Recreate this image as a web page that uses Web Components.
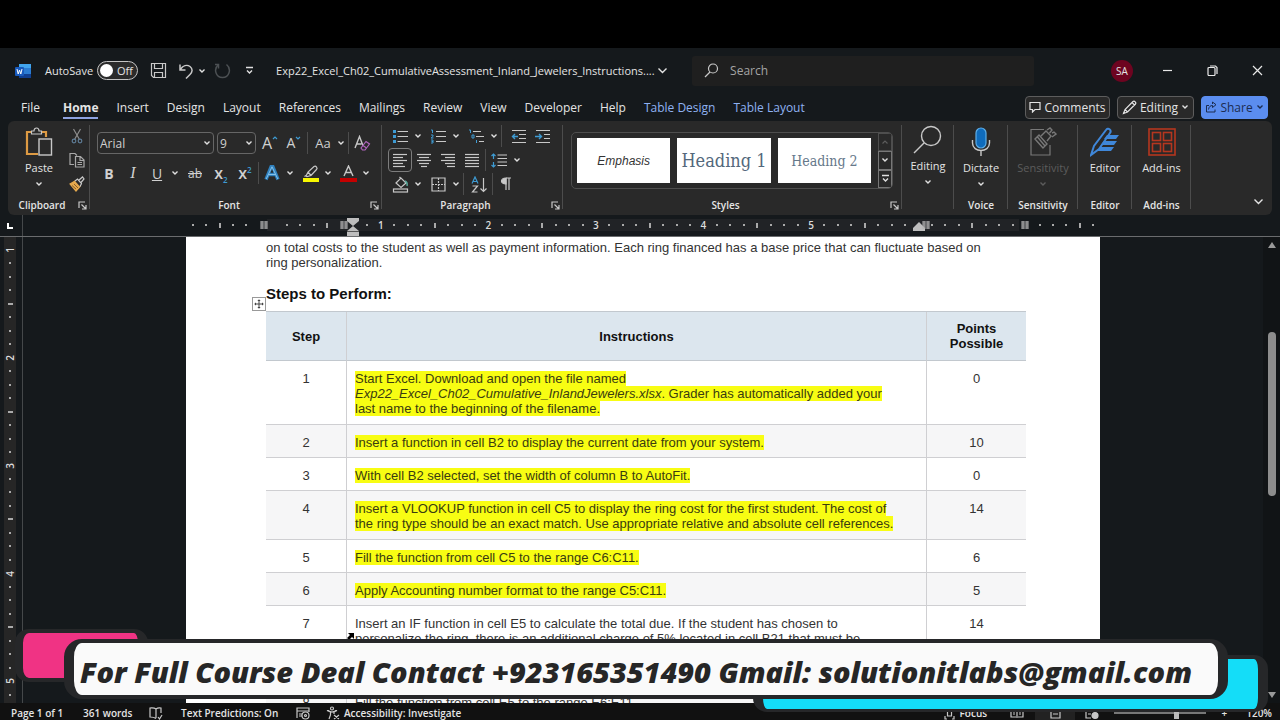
<!DOCTYPE html>
<html lang="en">
<head>
<meta charset="utf-8">
<title>Word</title>
<style>
html, body { margin: 0; height: 100%; background: #000; }
body { font-family: "Open Sans", "Noto Sans", sans-serif; color: #e4e4e4; overflow: hidden; }
</style>
</head>
<body>
<word-window></word-window>
<script>
const S = (w, h, body) => `<svg width="${w}" height="${h}" viewBox="0 0 ${w} ${h}" fill="none" stroke="#c8c8c8" stroke-width="1.2">${body}</svg>`;
const lines = (rows, w = 16, h = 14) => S(w, h, rows.map(([a, b, y]) => `<path d="M${a} ${y}H${b}"/>`).join(''));
const launcher = S(9, 9, '<path d="M1 7V1H7M3.500 3.500L8 8M8 4V8H4"/>');
const ICONS = {
  word: S(16, 16, '<rect x="4" y="1" width="12" height="14" rx="1" fill="#2b7cd3" stroke="none"/><rect x="4" y="1" width="12" height="4" fill="#41a5ee" stroke="none"/><rect x="4" y="11" width="12" height="4" fill="#103f91" stroke="none"/><rect x="0" y="4" width="9" height="9" rx="1" fill="#185abd" stroke="none"/><path d="M2 6l1.200 5L4.500 7l1.300 4L7 6" stroke="#fff" stroke-width="1"/>'),
  save: S(17, 17, '<path d="M1.500 1.500H15.500V15.500H3.500L1.500 13.500ZM4.500 1.500V6.500H12.500V1.500M4.500 15.500V10.500H12.500V15.500"/>'),
  undo: S(16, 16, '<path d="M2 1.500V7H7.500M2 7C5 2.500 9 1.500 12 3.500C15 6 14.500 9 12 11.500L8 15.500" stroke-width="1.500"/>'),
  redo: S(17, 17, '<path d="M12.500 2.500C18 7 15 15.500 8.500 15.500C2 15.500-1 7 4.500 2.500M4.500 6.500V2.500H1" stroke="#4c5053" stroke-width="1.500"/>'),
  chev: S(8, 8, '<path d="M1.500 2.500L4 5L6.500 2.500" stroke="#e0e0e0" stroke-width="1.400"/>'),
  chevdim: S(8, 8, '<path d="M1.500 2.500L4 5L6.500 2.500" stroke="#5c5c5c" stroke-width="1.400"/>'),
  chevup: S(8, 8, '<path d="M1.500 5.500L4 3L6.500 5.500" stroke="#5c5c5c"/>'),
  chevbig: S(11, 11, '<path d="M1.500 3.500L5.500 7.500L9.500 3.500" stroke="#e4e4e4" stroke-width="1.400"/>'),
  more: S(9, 9, '<path d="M1 1.500H8M2 4.500L4.500 7L7 4.500" stroke="#e0e0e0" stroke-width="1.400"/>'),
  search: S(15, 15, '<circle cx="9" cy="5.500" r="4.500"/><path d="M6 9L1 14"/>'),
  min: S(11, 11, '<path d="M1 5.500H10" stroke="#e8e8e8"/>'),
  restore: S(11, 11, '<rect x="1" y="2.500" width="7" height="8" rx="1" stroke="#e8e8e8"/><path d="M3 1H8.500L10 2.500V9" stroke="#e8e8e8"/>'),
  close: S(11, 11, '<path d="M1 1L10 10M10 1L1 10" stroke="#e8e8e8"/>'),
  comment: S(12, 12, '<path d="M1 1.500H11V8.500H6L3.500 11V8.500H1Z" stroke="#e4e4e4"/>'),
  pencil: S(15, 15, '<path d="M1.500 13.500L3 9.500L11 1.500C12.500 .5 14.500 2.500 13.500 4L5.500 12ZM3 9.500L5.500 12M10 2.500L12.500 5" stroke="#e4e4e4"/>'),
  share: S(12, 12, '<path d="M4 4.500H1.500V11H10V8.500M3.500 8.500C4 5.500 5.500 4.500 7.500 4.500V6.500L11 3.700L7.500 1V3" stroke="#1c2c50" stroke-width="1"/>'),
  paste: S(28, 30, '<path d="M7 5H2V27H13M16 5H21V10" stroke="#dd9a43" stroke-width="2.200"/><path d="M6.500 7V4H9C9 0 14 0 14 4H16.500V7Z"/><rect x="14" y="12" width="12.500" height="16" fill="#292929" stroke-width="1.400"/>'),
  cut: S(12, 16, '<path d="M2.500 1L8.500 11.500M9.500 1L3.500 11.500" stroke="#8d8d8d"/><circle cx="3" cy="13" r="1.800" stroke="#5e7c96"/><circle cx="9" cy="13" r="1.800" stroke="#5e7c96"/>'),
  copy: S(16, 16, '<path d="M5 12.500H1V1.500H6L8 3.500" stroke="#a8a8a8"/><path d="M6.500 4.500H11.500L15 8V15H6.500ZM11 5V8.500H15M8.500 10.500H13M8.500 12.500H13" stroke="#a8a8a8"/>'),
  painter: S(16, 16, '<path d="M1 8L6 5L11 10.500L7 15Z" fill="#e5a94e" stroke="#e5a94e"/><path d="M6 5L8.500 3L12.500 7.500L11 10.500M9.500 4.500L13.500 1L15 3L12 6.500" fill="#292929"/><path d="M3 9.500L7 13M5 8L9 12" stroke="#755020" stroke-width=".800"/>'),
  eraser: S(17, 17, '<path d="M1 13L5.500 1.500L9.500 12M2.500 9H7.500" stroke-width="1.400"/><path d="M7 13L12 6.500L15.500 9L11 15H8.500Z" fill="#292929" stroke="#b065bd"/><path d="M9 10.500L12.500 13" stroke="#b065bd"/>'),
  caretup: S(6, 4, '<path d="M1 3L3 1L5 3" stroke="#3e9bd3"/>'),
  caretdown: S(6, 4, '<path d="M1 1L3 3L5 1" stroke="#3e9bd3"/>'),
  effects: S(16, 16, '<path d="M2 14.500L7.200 1.500H8.800L14 14.500M4.500 9.500H11.500" stroke="#2f80bd" stroke-width="3.400"/><path d="M2.200 14L8 1.800L13.800 14M4.500 9.500H11.500" stroke="#8fc8ee" stroke-width=".900"/>'),
  marker: S(17, 17, '<path d="M4 11L6 7L12 1.500C14 .5 16 3 14.500 4.500L9 10.500L5 11.500ZM6 7L9 10.500M2.500 11.500L4 10.500"/><rect x="1" y="13" width="16" height="4" fill="#f7f700" stroke="none"/>'),
  fontcolor: S(17, 17, '<path d="M4 11L8.500 1L13 11M5.500 7.500H11.500" stroke-width="1.400"/><rect x="0" y="13" width="17" height="4" fill="#c40000" stroke="none"/>'),
  bullets: S(16, 15, '<path d="M5.500 2.500H16M5.500 7.500H16M5.500 12.500H16"/><path d="M1 2.500H4M1 7.500H4M1 12.500H4" stroke="#3e9bd3" stroke-width="3"/>'),
  numbers: S(16, 15, '<path d="M6 2.500H16M6 7.500H16M6 12.500H16"/><path d="M1 1H2.500V4M1 6H3V7.500L1 9H3.500M1 11H3V14H1M1.500 12.500H3" stroke="#3e9bd3" stroke-width="1"/>'),
  multi: S(16, 15, '<path d="M5 2.500H13M8 7.500H16M11 12.500H16"/><path d="M1 1H2.500V4M4 6H6V9H4ZM8.500 11V14" stroke="#3e9bd3" stroke-width="1"/>'),
  outdent: S(16, 15, '<path d="M1 1.500H15M8 5.500H15M8 9.500H15M1 13.500H15"/><path d="M7 7.500H1.500M4 5L1.500 7.500L4 10" stroke="#3e9bd3" stroke-width="1.400"/>'),
  indent: S(16, 15, '<path d="M1 1.500H15M9 5.500H15M9 9.500H15M1 13.500H15"/><path d="M0 7.500H6.500M4 5L6.500 7.500L4 10" stroke="#3e9bd3" stroke-width="1.400"/>'),
  left: lines([[1, 15, 1.5], [1, 11, 4.5], [1, 15, 7.5], [1, 11, 10.5], [1, 13, 13.5]], 16, 15),
  center: lines([[1, 15, 1.5], [3, 13, 4.5], [1, 15, 7.5], [3, 13, 10.5], [5, 11, 13.5]], 16, 15),
  right: lines([[1, 15, 1.5], [5, 15, 4.5], [1, 15, 7.5], [5, 15, 10.5], [7, 15, 13.5]], 16, 15),
  justify: lines([[1, 15, 1.5], [1, 15, 4.5], [1, 15, 7.5], [1, 15, 10.5], [1, 15, 13.5]], 16, 15),
  spacing: S(16, 15, '<path d="M6.500 2H16M6.500 5.500H16M6.500 9H16M6.500 12.500H16"/><path d="M2.500 1V6M.5 3L2.500 1L4.500 3M2.500 14V9M.5 12L2.500 14L4.500 12" stroke="#3e9bd3"/>'),
  shade: S(17, 17, '<path d="M4 7L9 2L14 7L9 11.500Z M7.500 1L9 2.500"/><path d="M13 5C15 6 15.500 8 15 10" stroke="#58a89a" stroke-width="1.500"/><rect x="1.500" y="13" width="14" height="3"/>'),
  borders: S(15, 15, '<path d="M1 1H14V14H1Z"/><path d="M7.500 1V14M1 7.500H14" stroke-dasharray="2 1"/>'),
  sort: S(17, 17, '<path d="M1 7.500L4 1L7 7.500M2 5.500H6" stroke="#3e9bd3"/><path d="M1.500 10H6.500L1.500 16H6.500M12.500 2V15.500M9.500 12.500L12.500 15.500L15.500 12.500"/>'),
  pilcrow: S(12, 14, '<path d="M6 1H11M6 1V13M9 1V13" /><path d="M6 1C0 1 0 7 6 7Z" fill="#c8c8c8"/>'),
  find: S(30, 30, '<circle cx="18" cy="11" r="9.500" stroke-width="1.400"/><path d="M11 18L1 28" stroke-width="1.400"/>'),
  mic: S(20, 30, '<rect x="5" y="1" width="10" height="20" rx="5" fill="#0f6cbd" stroke="#5eaee8"/><path d="M1.500 13V16C1.500 26 18.500 26 18.500 16V13M10 24V29" stroke-width="1.400"/>'),
  sens: S(28, 30, '<path d="M15 2.500H2V28H21V18" stroke="#787878"/><path d="M6 12L10 8L18 17L14 21ZM8.500 10L16 19M12 9L17 4L22 9L18 14M18 3L21 1L23 3L20.500 6M23 6L25 5L27 7L23 10" stroke="#787878" stroke-width="1.400"/>'),
  editor: S(30, 30, '<path d="M1 28L4 19L16 3C18 0 22 3 20 6L9 22Z" stroke="#3f87d9" stroke-width="2"/><path d="M17 8H29L26 12H14ZM14 14H27L24 18H11ZM11 20H24L21 24H6Z" fill="#3f87d9" stroke="none"/>'),
  addins: S(28, 28, '<g stroke="#b5361f" stroke-width="1.600"><rect x="1" y="1" width="26" height="26"/><rect x="4.500" y="4.500" width="8" height="8"/><rect x="15.500" y="4.500" width="8" height="8"/><rect x="4.500" y="15.500" width="8" height="8"/><rect x="15.500" y="15.500" width="8" height="8"/></g>'),
  launcher,
  book: S(14, 13, '<path d="M7 2V11M7 2C5 .5 3 1 1 1V10C3 10 5 10 7 11.500M7 2C9 .5 10 1 12 1V6M9 10L10.500 12L13 8"/>'),
  record: S(14, 13, '<path d="M1 11V1H13V5M1 4H13M3 7H6M3 9H6"/><circle cx="9.500" cy="8.500" r="3.500"/><circle cx="9.500" cy="8.500" r="1"/>'),
  access: S(14, 14, '<circle cx="6" cy="2.500" r="1.500"/><path d="M1 4.500L4.500 6V9L3 13M11 4.500L8 6V8M1 4.500L6 6L11 4.500M8 9L13 13M13 9L8 13"/>'),
  focus: S(11, 13, '<path d="M1 4V1H3M8 1H10V4M1 9V12H3M8 12H10V9M3.500 4H7.500V9H3.500Z"/>'),
  read: S(14, 13, '<path d="M7 3V11M7 3C5 2 3 2 1 2V10H6M7 3C9 2 11 2 13 2V10H8M3 5H5M3 7H5M9 5H11M9 7H11"/>'),
  print: S(11, 13, '<path d="M1 1H10V11H1ZM3 4H8M3 7H8"/>'),
  web: S(14, 13, '<path d="M1 1H12V5M1 1V11H6M3 4H8M3 7H6"/><circle cx="10" cy="8.500" r="3" fill="#c8c8c8"/>'),
  move: S(14, 14, '<rect x=".5" y=".5" width="13" height="13" fill="#fff" stroke="#999" stroke-width="1"/><path d="M7 2.500V11.500M2.500 7H11.500M5.800 3.500H8.200M5.800 10.500H8.200M3.500 5.800V8.200M10.500 5.800V8.200" stroke="#444" stroke-width="1"/>'),
  cursor: S(9, 9, '<path d="M2 1H8V7L6 5L3 8L1 6L4 3Z" fill="#000" stroke="none"/>'),
  grips: S(12, 18, '<path d="M0 0H12V3L6 8L0 3ZM0 13L6 8L12 13V18H0Z" fill="#bdbdbd" stroke="none"/><path d="M0 13.500H12" stroke="#555" stroke-width="1"/>'),
  rgrip: S(12, 10, '<path d="M0 10V7L6 1L12 7V10Z" fill="#bdbdbd" stroke="none"/>'),
  colmark: S(8, 9, '<path d="M0 1H8M0 3H8M0 5H8M0 7H8M2 0V8M6 0V8" stroke="#b4b4b4" stroke-width="1"/>'),
};

const BASE = `*{box-sizing:border-box}
button,a,input,select{font:inherit;color:inherit;background:none;border:0;padding:0;margin:0;text-decoration:none}
svg{display:block;flex:none}`;

function define(name, css, html) {
  customElements.define(name, class extends HTMLElement {
    constructor() {
      super();
      const root = this.attachShadow({ mode: 'open' });
      const body = typeof html === 'function' ? html(this) : html;
      root.innerHTML = `<style>${BASE}${css}</style>${body}`;
    }
  });
}

define('ui-icon', ':host{display:block;flex:none}', el => ICONS[el.getAttribute('name')] || '');

define('tool-button', `
:host{display:flex;flex:none;height:24px}
button{display:flex;align-items:center;height:24px;border-radius:4px}
.face{display:flex;justify-content:center;align-items:center;width:24px}
.arrow{display:flex;justify-content:center;width:12px}
:host([pressed]) button{outline:1px solid #7d7d7d;outline-offset:-1px}
`, el => `<button type="button" aria-label="${el.getAttribute('label')}"><span class="face"><slot></slot></span>${el.hasAttribute('menu') ? `<span class="arrow">${ICONS.chev}</span>` : ''}</button>`);

define('big-button', `
:host{display:block;flex:none;font-size:11px;font-weight:500}
button{display:flex;flex-direction:column;align-items:center;width:100%}
.pic{height:32px;display:flex;align-items:center}
.txt{line-height:16px;margin-top:2px}
.arrow{margin-top:4px}
:host([disabled]) button{color:#5c5c5c}
`, el => `<button type="button" ${el.hasAttribute('disabled') ? 'disabled' : ''}><span class="pic">${ICONS[el.getAttribute('icon')]}</span><span class="txt"><slot></slot></span>${el.hasAttribute('menu') ? `<span class="arrow">${el.hasAttribute('disabled') ? ICONS.chevdim : ICONS.chev}</span>` : ''}</button>`);

define('ribbon-group', `
:host{display:grid;grid-template-rows:1fr 16px;flex:none;padding:3px 0 2px;position:relative}
:host::after{content:"";position:absolute;right:0;top:4px;bottom:6px;width:1px;background:#4c4c4c}
.label{display:flex;align-items:center;justify-content:center;font-size:10px;font-weight:600;line-height:16px}
:host([launch]) .label{padding-right:14px}
.launch{position:absolute;right:3px;bottom:5px}
`, el => `<div><slot></slot></div><div class="label">${el.getAttribute('label') || ''}</div>${el.hasAttribute('launch') ? `<button class="launch" aria-label="${el.getAttribute('label')} settings">${ICONS.launcher}</button>` : ''}`);

define('style-card', `
:host{display:flex;width:94px;height:45px}
button{flex:1;background:#fff;display:flex;align-items:center;justify-content:center;color:#333;white-space:nowrap}
:host([kind=emphasis]) button{font:italic 12px "Liberation Sans",sans-serif}
:host([kind=h1]) button{font:18px "DejaVu Serif Condensed","DejaVu Serif",serif;color:#53687c}
:host([kind=h2]) button{font:14px "DejaVu Serif Condensed","DejaVu Serif",serif;color:#66788a}
`, '<button type="button"><slot></slot></button>');

define('title-bar', `
:host{display:flex;align-items:center;height:45px;font-size:11px;padding-left:15px}
label{display:flex;align-items:center;gap:4px;margin-left:14px}
input[type=checkbox]{appearance:none;width:41px;height:19px;border:1px solid #c4c4c4;border-radius:10px;background:#2b2b2b;grid-area:1/1;position:relative}
input[type=checkbox]::before{content:"";position:absolute;left:2px;top:2px;width:13px;height:13px;border-radius:50%;background:#fff}
.switch{display:grid;align-items:center}
.switch span{grid-area:1/1;padding-left:20px;position:relative}
.quick{display:flex;align-items:center;margin-left:12px}
.name{display:flex;align-items:center;gap:2px;margin-left:22px;width:382px;white-space:nowrap}
.search{display:flex;align-items:center;gap:11px;width:342px;height:30px;margin-left:34px;padding-left:12px;background:#1f1f1f;border-radius:3px;font-size:12px}
.search input{flex:1;min-width:0;outline:0}
.search input::placeholder{color:#a4a4a4;opacity:1}
.avatar{margin-left:auto;width:22px;height:22px;border-radius:50%;background:#6d0420;display:flex;align-items:center;justify-content:center;font-size:10px;margin-right:12px}
.win{width:45px;height:45px;display:flex;align-items:center;justify-content:center}
.u{margin-right:4px}.r{margin:0 14px 0 8px}.s{margin-right:11px}
`, `${ICONS.word}
<label>AutoSave<span class="switch"><input type="checkbox" role="switch"><span>Off</span></span></label>
<div class="quick"><button class="s" aria-label="Save">${ICONS.save}</button><button class="u" aria-label="Undo">${ICONS.undo}</button><button aria-label="Undo list">${ICONS.chev}</button><button class="r" aria-label="Redo">${ICONS.redo}</button><button aria-label="Customize toolbar">${ICONS.more}</button></div>
<button class="name"><span>Exp22_Excel_Ch02_CumulativeAssessment_Inland_Jewelers_Instructions....</span>${ICONS.chevbig}</button>
<div class="search">${ICONS.search}<input type="search" aria-label="Search" placeholder="Search"></div>
<button class="avatar" aria-label="Account">SA</button>
<button class="win" aria-label="Minimize">${ICONS.min}</button><button class="win" aria-label="Restore">${ICONS.restore}</button><button class="win" aria-label="Close">${ICONS.close}</button>`);

const TABS = ['File', 'Home', 'Insert', 'Design', 'Layout', 'References', 'Mailings', 'Review', 'View', 'Developer', 'Help', 'Table Design', 'Table Layout'];
define('tab-strip', `
:host{display:flex;align-items:center;height:28px;padding:0 12px 0 21px;font-size:12px}
nav{display:flex;gap:18px;white-space:nowrap}
a{line-height:18px;border-bottom:2px solid transparent;padding-top:3px}
a:first-child{margin-right:5px}
a.on{font-weight:700;border-color:#8ea2e0}
a.ctx{color:#8fb2f2}
.acts{margin-left:auto;display:flex;gap:7px;font-weight:500}
.acts button{height:23px;border:1px solid #5d5d5d;border-radius:4px;background:#292929;display:flex;align-items:center;justify-content:center;gap:3px}
.acts .c{width:85px}.acts .e{width:77px}
.acts .s{width:67px;background:#5b8def;border-color:#5b8def;color:#1c2c50}
.s svg:last-child path{stroke:#1c2c50}
`, `<nav>${TABS.map((t, i) => `<a href="#" class="${i === 1 ? 'on' : i > 10 ? 'ctx' : ''}">${t}</a>`).join('')}</nav>
<div class="acts"><button class="c">${ICONS.comment}Comments</button><button class="e">${ICONS.pencil}Editing ${ICONS.chev}</button><button class="s">${ICONS.share}Share ${ICONS.chev}</button></div>`);

define('ribbon-bar', `
:host{display:flex;height:94px;margin:0 8px;background:#292929;border-radius:6px;position:relative}
.row{display:flex;align-items:center;height:24px;color:#d0d0d0}
i.div{width:1px;height:22px;background:#4c4c4c;margin:0 1px}
.clip{width:82px}.font{width:292px}.para{width:181px}.styles{width:339px}
.edit{width:52px}.voice{width:54px}.sens{width:70px}.editor{width:54px}.add{width:59px}
.clipbox{display:grid;grid-template-columns:52px 1fr;padding:2px 0 0 5px}
.stack{display:flex;flex-direction:column;margin-top:-2px}
.fontbox{padding:7px 0 0 7px}
.pick{position:relative;display:flex;align-items:center;height:22px;border:1px solid #666;border-radius:4px;margin-right:3px}
.pick select{appearance:none;width:100%;height:20px;padding-left:2px;font-size:12px;outline:0}
.pick svg{position:absolute;right:2px;pointer-events:none}
.f1{width:117px}.f2{width:39px;margin-right:2px}
.second{margin-top:6px}
.parabox{padding-left:6px}
.gap2{margin-left:2px}.gap4{margin-left:4px}
b,em,u,s{font-size:14px}
em{font-family:"Liberation Serif",serif;font-size:16px}
s{font-size:12px}
sub,sup{font-size:8px;color:#3e9bd3;line-height:0}
.x{font-weight:600}
.aa{font-size:13px}
.size{display:flex;align-items:flex-start;font-size:16px;line-height:18px}
.size.small{font-size:14px}
.size ui-icon{margin-top:2px}
.gallery{display:flex;gap:7px;align-items:center;height:57px;margin:8px 8px 0;padding-left:5px;border:1px solid #4e4e4e;border-radius:5px;overflow:hidden;width:322px}
.scroll{display:grid;grid-template-rows:repeat(3,1fr);width:14px;height:100%;margin-left:auto}
.scroll button{display:flex;align-items:center;justify-content:center;border:1px solid #777}
.scroll button:first-child{border-color:#4e4e4e}
.one{padding-top:2px}
.collapse{margin-left:auto;align-self:flex-end;padding:0 8px 8px}
`, `
<ribbon-group class="clip" label="Clipboard" launch><div class="clipbox"><big-button icon="paste" menu>Paste</big-button><div class="stack"><tool-button label="Cut"><ui-icon name="cut"></ui-icon></tool-button><tool-button label="Copy"><ui-icon name="copy"></ui-icon></tool-button><tool-button label="Format Painter"><ui-icon name="painter"></ui-icon></tool-button></div></div></ribbon-group>
<ribbon-group class="font" label="Font" launch><div class="fontbox">
<div class="row"><span class="pick f1"><select aria-label="Font"><option>Arial</option></select>${ICONS.chev}</span><span class="pick f2"><select aria-label="Font size"><option>9</option></select>${ICONS.chev}</span>
<tool-button label="Grow font"><span class="size">A<ui-icon name="caretup"></ui-icon></span></tool-button><tool-button label="Shrink font"><span class="size small">A<ui-icon name="caretdown"></ui-icon></span></tool-button><i class="div"></i><tool-button class="gap2" label="Change case" menu><span class="aa">Aa</span></tool-button><i class="div gap4"></i><tool-button label="Clear formatting"><ui-icon name="eraser"></ui-icon></tool-button></div>
<div class="row second"><tool-button label="Bold"><b>B</b></tool-button><tool-button label="Italic"><em>I</em></tool-button><tool-button label="Underline" menu><u>U</u></tool-button><tool-button class="gap2" label="Strikethrough"><s>ab</s></tool-button><tool-button class="gap2" label="Subscript"><span class="x">x<sub>2</sub></span></tool-button><tool-button label="Superscript"><span class="x">x<sup>2</sup></span></tool-button><i class="div gap2"></i><tool-button label="Text effects" menu><ui-icon name="effects"></ui-icon></tool-button><tool-button class="gap2" label="Highlight" menu><ui-icon name="marker"></ui-icon></tool-button><tool-button class="gap2" label="Font color" menu><ui-icon name="fontcolor"></ui-icon></tool-button></div>
</div></ribbon-group>
<ribbon-group class="para" label="Paragraph" launch><div class="parabox">
<div class="row"><tool-button label="Bullets" menu><ui-icon name="bullets"></ui-icon></tool-button><tool-button class="gap2" label="Numbering" menu><ui-icon name="numbers"></ui-icon></tool-button><tool-button class="gap2" label="Multilevel list" menu><ui-icon name="multi"></ui-icon></tool-button><i class="div gap4"></i><tool-button class="gap4" label="Decrease indent"><ui-icon name="outdent"></ui-icon></tool-button><tool-button label="Increase indent"><ui-icon name="indent"></ui-icon></tool-button></div>
<div class="row"><tool-button label="Align left" pressed><ui-icon name="left"></ui-icon></tool-button><tool-button label="Center"><ui-icon name="center"></ui-icon></tool-button><tool-button label="Align right"><ui-icon name="right"></ui-icon></tool-button><tool-button label="Justify"><ui-icon name="justify"></ui-icon></tool-button><i class="div"></i><tool-button label="Line spacing" menu><ui-icon name="spacing"></ui-icon></tool-button></div>
<div class="row"><tool-button label="Shading" menu><ui-icon name="shade"></ui-icon></tool-button><tool-button class="gap2" label="Borders" menu><ui-icon name="borders"></ui-icon></tool-button><i class="div gap4"></i><tool-button class="gap2" label="Sort"><ui-icon name="sort"></ui-icon></tool-button><i class="div"></i><tool-button label="Show marks"><ui-icon name="pilcrow"></ui-icon></tool-button></div>
</div></ribbon-group>
<ribbon-group class="styles" label="Styles" launch><div class="gallery"><style-card kind="emphasis">Emphasis</style-card><style-card kind="h1">Heading 1</style-card><style-card kind="h2">Heading 2</style-card><div class="scroll"><button aria-label="Previous">${ICONS.chevup}</button><button aria-label="Next">${ICONS.chev}</button><button aria-label="More">${ICONS.more}</button></div></div></ribbon-group>
<ribbon-group class="edit"><big-button icon="find" menu>Editing</big-button></ribbon-group>
<ribbon-group class="voice" label="Voice"><big-button class="one" icon="mic" menu>Dictate</big-button></ribbon-group>
<ribbon-group class="sens" label="Sensitivity"><big-button class="one" icon="sens" menu disabled>Sensitivity</big-button></ribbon-group>
<ribbon-group class="editor" label="Editor"><big-button class="one" icon="editor">Editor</big-button></ribbon-group>
<ribbon-group class="add" label="Add-ins"><big-button class="one" icon="addins">Add-ins</big-button></ribbon-group>
<button class="collapse" aria-label="Collapse ribbon">${ICONS.chevbig}</button>`);

const tick = (i, n) => i % 8 === 0 ? `<b>${n}</b>` : i % 4 === 0 ? '<i class="half"></i>' : '<i></i>';
const RULER = `b{font-size:10px;font-weight:600;line-height:12px;color:#ddd}
i{width:2px;height:2px;background:#aaa}
span{display:flex;align-items:center;justify-content:center;min-width:0;min-height:0}`;
const H_HIDE = [-1, 0, 5, 6, 48, 56];
define('h-ruler', `:host{display:grid;grid-template-columns:23px 1fr 17px;height:22px;border-bottom:1px solid #6a6c6e}
${RULER}
.tab{display:flex;justify-content:center;align-items:center;border-right:1px solid #45484a;padding-right:2px}
.track{position:relative;justify-self:center;width:914px;height:12px;margin-top:4px;display:grid;grid-template-columns:repeat(68,1fr)}
.in{background:#212326}
.half{width:2px;height:5px}
.m{position:absolute;top:2px}
.m.tall{top:-1px}
`, () => {
  let out = '';
  for (let i = -6; i < 62; i++) out += `<span class="${i >= 0 && i < 56 ? 'in' : ''}">${H_HIDE.includes(i) ? '' : tick(i, Math.abs(i / 8))}</span>`;
  const mark = (x, icon, cls = '') => `<div class="m ${cls}" style="left:${x}px">${ICONS[icon]}</div>`;
  return `<div class="tab">${S(6, 6, '<path d="M1 0V5H6" stroke="#fff" stroke-width="2"/>')}</div><div class="track">${out}${mark(74, 'colmark')}${mark(154, 'colmark')}${mark(161, 'grips', 'tall')}${mark(727, 'rgrip')}${mark(736, 'colmark')}${mark(835, 'colmark')}</div><div></div>`;
});

define('v-ruler', `:host{display:block;overflow:hidden;border-right:1px solid #45484a;padding:0 6px 0 4px}
${RULER}
.track{height:478px;padding-top:6px;background:#262626;display:grid;grid-template-rows:repeat(35,1fr)}
.half{width:5px;height:2px}
b{writing-mode:vertical-rl;transform:rotate(180deg)}
`, () => {
  let out = '';
  for (let i = 8; i < 43; i++) out += `<span>${tick(i, i / 8)}</span>`;
  return `<div class="track">${out}</div>`;
});

const STEPS = [
  [1, '<mark>Start Excel. Download and open the file named<br><em>Exp22_Excel_Ch02_Cumulative_InlandJewelers.xlsx</em>. Grader has automatically added your<br>last name to the beginning of the filename.</mark>', 0, 64],
  [2, '<mark>Insert a function in cell B2 to display the current date from your system.</mark>', 10, 33],
  [3, '<mark>With cell B2 selected, set the width of column B to AutoFit.</mark>', 0, 33],
  [4, '<mark>Insert a VLOOKUP function in cell C5 to display the ring cost for the first student. The cost of<br>the ring type should be an exact match. Use appropriate relative and absolute cell references.</mark>', 14, 49],
  [5, '<mark>Fill the function from cell C5 to the range C6:C11.</mark>', 6, 33],
  [6, '<mark>Apply Accounting number format to the range C5:C11.</mark>', 5, 33],
  [7, 'Insert an IF function in cell E5 to calculate the total due. If the student has chosen to<br>personalize the ring, there is an additional charge of 5% located in cell B21 that must be', 14, 79],
  [8, 'Fill the function from cell E5 to the range E6:E11.', '', 33],
];
define('doc-page', `
:host{display:block;width:914px;background:#fff;color:#333;font:13px/15px "Liberation Sans",Arial,sans-serif;padding:3px 74px 0 80px}
p{margin:0;white-space:nowrap}
h2{font-size:15px;line-height:18px;margin:15px 0 8px;color:#111}
.tw{position:relative}
.handle{position:absolute;left:-14px;top:-14px}
.cursor{position:absolute;left:80px;top:321px}
table{width:760px;border-collapse:separate;border-spacing:0;table-layout:fixed;border-top:1px solid #c2c8ce}
th{height:49px;background:#dce6ee;color:#111;padding:0;font-weight:700;vertical-align:middle;border-bottom:1px solid #c2c8ce}
td{vertical-align:top;padding:10px 8px 0;white-space:nowrap;border-bottom:1px solid #cfcfd2}
th+th,td+td{border-left:1px solid #cfcfd2}
td:first-child,td:last-child{text-align:center}
tbody tr:nth-child(even) td{background:#f6f6f7}
mark{background:#f8fd13;color:#3a3c10}
em{font-style:italic}
`, `<p>on total costs to the student as well as payment information. Each ring financed has a base price that can fluctuate based on<br>ring personalization.</p>
<h2>Steps to Perform:</h2>
<div class="tw"><div class="handle">${ICONS.move}</div><table><colgroup><col style="width:80px"><col style="width:580px"><col style="width:100px"></colgroup><thead><tr><th>Step</th><th>Instructions</th><th>Points<br>Possible</th></tr></thead>
<tbody>${STEPS.map(([n, t, p, h]) => `<tr style="height:${h}px"><td>${n}</td><td>${t}</td><td>${p}</td></tr>`).join('')}</tbody></table><div class="cursor">${ICONS.cursor}</div></div>`);

define('scroll-rail', `
:host{display:flex;flex-direction:column;align-items:center;padding:5px 0 5px;background:#111416}
.up,.down{border:4px solid transparent}
.up{border-bottom:6px solid #999;border-top:0}
.down{border-top:6px solid #999;border-bottom:0;margin-top:auto}
.thumb{width:8px;height:164px;border-radius:4px;background:#8d8d8d;margin-top:84px}
`, '<div class="up"></div><div class="thumb"></div><div class="down"></div>');

define('status-bar', `
:host{display:flex;align-items:center;height:17px;background:#111;font-size:10px;font-weight:600;padding:3px 8px 0 11px;line-height:14px;white-space:nowrap;overflow:hidden}
button{display:flex;align-items:center;gap:4px}
.pg{width:72px}.wd{width:66px}.bk{width:32px}.tp{width:115px}.rc{width:30px}
.end{margin-left:auto;display:flex;align-items:center}
.fo{width:66px}.rd{width:25px}.pr{width:40px;height:17px;justify-content:center;background:#222;margin-right:10px}
input{appearance:none;width:92px;height:2px;background:#777;margin:0 15px}
input::-webkit-slider-thumb{appearance:none;width:5px;height:12px;background:#bbb}
.z{margin-left:19px}
`, `<button class="pg">Page 1 of 1</button><button class="wd">361 words</button><button class="bk" aria-label="Proofing">${ICONS.book}</button><button class="tp">Text Predictions: On</button><button class="rc" aria-label="Macros">${ICONS.record}</button><button>${ICONS.access}Accessibility: Investigate</button>
<div class="end"><button class="fo">${ICONS.focus}Focus</button><button class="rd" aria-label="Read mode">${ICONS.read}</button><button class="pr" aria-label="Print layout">${ICONS.print}</button><button aria-label="Web layout">${ICONS.web}</button><input type="range" aria-label="Zoom" min="10" max="200" value="140"><span>+</span><button class="z">120%</button></div>`);

define('promo-banner', `
:host{position:absolute;left:0;right:0;bottom:0;height:91px;pointer-events:none}
div{position:absolute;border:solid #262729}
.pink{left:15px;top:0;width:133px;height:53px;background:#f03384;border-width:4px 10px 4px 8px;border-radius:14px}
.cyan{right:12px;bottom:8px;width:515px;height:57px;background:#14ddf8;border-width:4px 10px 3px;border-radius:14px}
.card{left:64px;right:52px;top:10px;height:60px;background:#fafafa;border-width:4px 10px;border-radius:18px;display:flex;align-items:center;justify-content:center;color:#262626;font-size:29px;font-weight:800;font-style:italic;white-space:nowrap;padding:4px 20px 0 0}
`, '<div class="pink"></div><div class="cyan"></div><div class="card"><span>For Full Course Deal Contact +923165351490 Gmail: solutionitlabs@gmail.com</span></div>');

define('word-window', `
:host{display:flex;flex-direction:column;height:100vh;position:relative;overflow:hidden;background:#15191c}
.top{height:48px;flex:none;background:#000}
title-bar,tab-strip,ribbon-bar,h-ruler,status-bar{flex:none}
main{flex:1;min-height:0;display:grid;grid-template-columns:23px 1fr 17px;overflow:hidden}
.desk{display:flex;justify-content:center;overflow:hidden;min-height:0}
v-ruler,scroll-rail{min-height:0}
`, `<div class="top"></div><title-bar></title-bar><tab-strip></tab-strip><ribbon-bar></ribbon-bar><h-ruler></h-ruler>
<main><v-ruler></v-ruler><div class="desk"><doc-page></doc-page></div><scroll-rail></scroll-rail></main>
<status-bar></status-bar><promo-banner></promo-banner>`);
</script>
</body>
</html>
